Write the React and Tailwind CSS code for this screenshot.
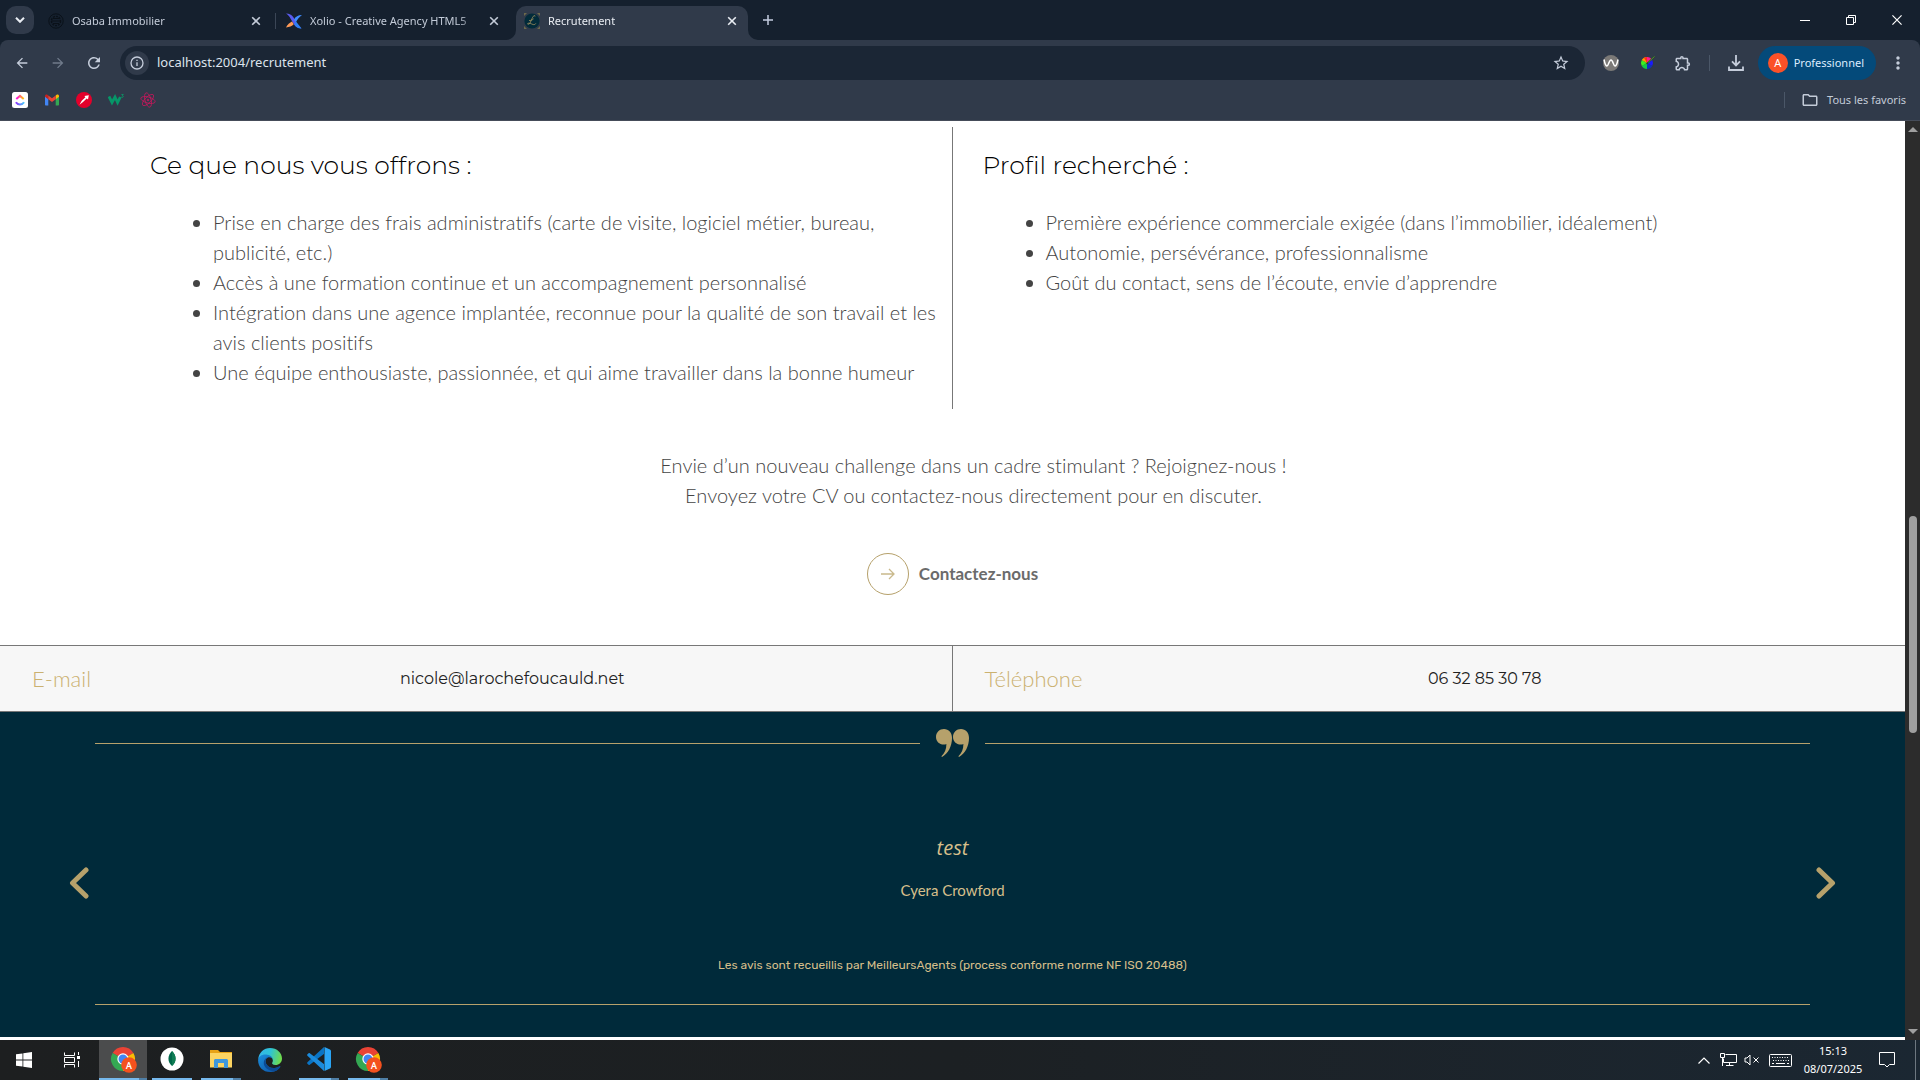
import React from "react";
import {
  MdArrowBack,
  MdArrowForward,
  MdRefresh,
  MdStarBorder,
  MdOutlineExtension,
  MdMoreVert,
  MdOutlineFolder,
} from "react-icons/md";

const uiFont = "font-['Noto_Sans','Open_Sans',sans-serif]";

/* ---------- small drawings ---------- */

function Cross({ className = "size-2.5", width = 1.6 }) {
  return (
    <svg viewBox="0 0 10 10" className={className} fill="none" stroke="currentColor" strokeWidth={width}>
      <path d="M1.2 1.2l7.6 7.6M8.8 1.2L1.2 8.8" />
    </svg>
  );
}

function OsabaIcon() {
  return (
    <svg viewBox="0 0 16 16" className="size-4 shrink-0" fill="none" stroke="#0a1119">
      <circle cx="8" cy="8" r="7.2" />
      <circle cx="8" cy="8" r="4.6" strokeWidth="1.4" strokeDasharray="2 1" />
      <path d="M3 8h10M5 5.5h6M5 10.5h6" />
    </svg>
  );
}

function XolioIcon() {
  return (
    <svg viewBox="0 0 16 16" className="size-4 shrink-0">
      <path d="M0 .5c3.500.2 5.500 1 7.200 3.500L9.600 8c1 2.200 2.600 4.700 5.600 7.400-4.200-.4-6.200-2-7.600-4.600L4.500 5.500C3.500 3.500 2 1.800 0 .5z" fill="#5b5bf0" />
      <path d="M16 2c-4 .2-6.500 1.500-8 4.500l1.800 3C11.200 6.500 13 4.500 16 2z" fill="#3f8cff" />
      <path d="M6 8.500c-2 1.300-4.800 3-6 6 3.400-.4 6-1.500 7.800-3.300z" fill="#ff9a57" />
      <path d="M9.600 8l6 7.400c-3 .3-5.600-1-7.200-4z" fill="#2f80f5" />
    </svg>
  );
}

function RecruitIcon() {
  return (
    <svg viewBox="0 0 16 16" className="size-4 shrink-0">
      <path d="M0 0h3L0 3zM16 0v3l-3-3zM0 16v-3l3 3zM16 16h-3l3-3z" fill="#6d6a4c" />
      <circle cx="8" cy="8" r="7.600" fill="#022b3a" />
      <path d="M11 3.500c.6-1.500-1.500-1-2.300.7L6 10c-.6 1.300-2.400 1.700-2.400.8 0-1 2.600-.6 4.600.4 1.500.7 3 .6 3.600-.8M5 7.500c1.600.2 3.500-.6 4.600-1.700" fill="none" stroke="#a3935f" strokeWidth=".8" />
    </svg>
  );
}

function ClickUpIcon() {
  return (
    <svg viewBox="0 0 16 16" className="size-4">
      <defs>
        <linearGradient id="cuTop" x1="0" x2="1">
          <stop offset="0" stopColor="#ff02f0" />
          <stop offset="1" stopColor="#ffc800" />
        </linearGradient>
        <linearGradient id="cuLow" x1="0" x2="1">
          <stop offset="0" stopColor="#8930fd" />
          <stop offset="1" stopColor="#49ccf9" />
        </linearGradient>
      </defs>
      <rect width="16" height="16" rx="2.500" fill="#fff" />
      <path d="M4.300 7L8 3.900 11.700 7" fill="none" stroke="url(#cuTop)" strokeWidth="2" />
      <path d="M3.900 10.300c2 3 6.200 3 8.200 0" fill="none" stroke="url(#cuLow)" strokeWidth="2" />
    </svg>
  );
}

function GmailIcon() {
  return (
    <svg viewBox="0 0 16 16" className="size-4">
      <path d="M1 4v8.800c0 .4.300.7.700.7h2.600V6.500z" fill="#4285f4" />
      <path d="M15 4v8.800c0 .4-.3.700-.7.700h-2.600V6.500z" fill="#34a853" />
      <path d="M11.700 3.500V7.200L15 4.700V4c0-1.400-1.500-2-2.400-1.200z" fill="#fbbc04" />
      <path d="M4.300 3.500V7.200L1 4.700V4c0-1.400 1.500-2 2.400-1.200z" fill="#c5221f" />
      <path d="M4.300 7.200V3.500L8 6.300l3.700-2.800v3.700L8 10z" fill="#ea4335" />
    </svg>
  );
}

function RedArrowIcon() {
  return (
    <svg viewBox="0 0 16 16" className="size-4">
      <circle cx="8" cy="8" r="8" fill="#e4002b" />
      <path d="M12.800 3.200l-.8 4.300-1.300-1-3.700 3.600L3.500 12.800l2.200-4 3.700-3.600-1-1.200z" fill="#fff" />
    </svg>
  );
}

function W3Icon() {
  return (
    <svg viewBox="0 0 16 16" className="size-4" fill="none" stroke="#04aa6d">
      <path d="M1 4.500l3 6L7 5l2.600 5.500L12.300 5" strokeWidth="2.800" stroke="#069668" />
      <path d="M13.400 2.500h1.900l-1 1.200c1.600.1 1.200 1.800-.2 1.700l-.8-.3" strokeWidth=".7" />
    </svg>
  );
}

function AtomIcon() {
  return (
    <svg viewBox="0 0 16 16" className="size-4" fill="none" stroke="#c2185b" strokeWidth=".8">
      <ellipse cx="8" cy="8" rx="7.400" ry="3" transform="rotate(15 8 8)" />
      <ellipse cx="8" cy="8" rx="7.400" ry="3" transform="rotate(75 8 8)" />
      <ellipse cx="8" cy="8" rx="7.400" ry="3" transform="rotate(135 8 8)" />
      <circle cx="8" cy="8" r=".8" fill="#c2185b" />
    </svg>
  );
}

function WaveExtensionIcon() {
  return (
    <svg viewBox="0 0 16 16" className="size-4">
      <circle cx="8" cy="8" r="8" fill="#7b7977" />
      <path d="M1 4.500c.8 4 1.500 6.500 3 6.500s2-6 4-6 2.400 6 4 6 2.200-2.500 3-6.500" fill="none" stroke="#fff" strokeWidth="1.500" />
    </svg>
  );
}

function ColorWheel() {
  const slices = [
    ["M8 8V2A6 6 0 0 1 13.200 5z", "#ff1a8c"],
    ["M8 8l5.200-3a6 6 0 0 1 0 6z", "#1a1aff"],
    ["M8 8l5.200 3A6 6 0 0 1 8 14z", "#1030c0"],
    ["M8 8v6a6 6 0 0 1-5.200-3z", "#12c94a"],
    ["M8 8l-5.200 3a6 6 0 0 1 0-6z", "#3bf020"],
    ["M8 8L2.800 5A6 6 0 0 1 8 2z", "#ffa000"],
    ["M8 8L5 2.800A6 6 0 0 1 8 2z", "#ff2a1a"],
  ];
  return (
    <svg viewBox="0 0 16 16" className="size-4">
      {slices.map(([d, c]) => (
        <path key={c} d={d} fill={c} />
      ))}
      <path d="M7.500 9L15.500 1.500" stroke="#2c4a22" strokeWidth="1.500" />
      <path d="M9 7.500l6.500-6" stroke="#4c8b33" strokeWidth="1" />
    </svg>
  );
}

function ChromeBadge() {
  return (
    <svg viewBox="0 0 24 24" className="size-6 overflow-visible">
      <path d="M12 12L1.600 6A12 12 0 0 1 22.400 6z" fill="#ea4335" />
      <path d="M12 12L22.400 6A12 12 0 0 1 12 24z" fill="#fbbc04" />
      <path d="M12 12v12A12 12 0 0 1 1.600 6z" fill="#34a853" />
      <circle cx="12" cy="12" r="5.700" fill="#fff" />
      <circle cx="12" cy="12" r="4.500" fill="#4285f4" />
      <circle cx="18" cy="18" r="7.800" fill="#f4511e" />
      <text x="18" y="21.500" textAnchor="middle" fontSize="9.500" fontWeight="500" fill="#fff" fontFamily="Roboto, sans-serif">A</text>
    </svg>
  );
}

function MongoIcon() {
  return (
    <svg viewBox="0 0 24 24" className="size-6">
      <circle cx="12" cy="12" r="11.500" fill="#fff" />
      <path d="M12 4c4.500 4.500 5 10.500 0 15-5-4.500-4.500-10.500 0-15z" fill="#00684a" />
      <path d="M12 4c4.500 4.500 5 10.500 0 15z" fill="#0f7d53" />
    </svg>
  );
}

function ExplorerIcon() {
  return (
    <svg viewBox="0 0 24 20" className="h-5 w-6">
      <path d="M1 1h8l2 2h12v5H1z" fill="#e8a317" />
      <path d="M1 4h22v14.500H1z" fill="#fcd462" />
      <path d="M5 19v-7.500c0-.8.700-1.500 1.500-1.500h11c.800 0 1.500.7 1.500 1.500V19h-4v-5H9v5z" fill="#3f97dc" />
    </svg>
  );
}

function EdgeIcon() {
  return (
    <svg viewBox="0 0 24 24" className="size-6">
      <defs>
        <linearGradient id="edTop" x1="0" x2="1" y1=".2" y2=".4">
          <stop offset="0" stopColor="#36b5ea" />
          <stop offset=".5" stopColor="#2ec3d6" />
          <stop offset="1" stopColor="#6fdc4c" />
        </linearGradient>
        <linearGradient id="edLow" x1="0" x2="1" y1="0" y2="1">
          <stop offset="0" stopColor="#1b8fdc" />
          <stop offset="1" stopColor="#0c4fa0" />
        </linearGradient>
      </defs>
      <path d="M.2 11C1 4.500 5.900 0 12 0c7 0 12 5 12 10.500 0 4-3 6.500-6.500 6.500-3 0-4-1.300-3.200-2.400 1.500-2.100.2-5.600-3.500-6.100C6.500 7.500 2 8.500.2 11z" fill="url(#edTop)" />
      <path d="M.1 12C.5 8.500 4 6.300 8 6.600c3.800.3 6.500 2.300 6.800 4.700-.8-1.600-2.500-2.400-4.300-2.100C7.800 10 7 13 8 15.500c1.200 3 4.800 5 8.700 4.500 2-.2 3.700-1 5-1.700.5-.2.800.2.500.6A12 12 0 0 1 12 24C5 24 0 18.800.1 12z" fill="url(#edLow)" />
      <path d="M10.500 9.200C7.500 10 6.800 13 8 15.500c1.200 3 4.800 5 8.700 4.500 2-.2 3.700-1 5-1.700.5-.2.800.2.500.6-1.300 2-3.300 3.600-5.500 4.400C10 23 5.500 19 5.800 14.500c.1-3 2-4.800 4.700-5.300z" fill="#0b4a94" />
    </svg>
  );
}

function CodeIcon() {
  return (
    <svg viewBox="0 0 24 24" className="size-6">
      <path d="M17.500 6.500L2.800 17.800c-.4.300-.9.300-1.200 0L.4 16.700c-.4-.4-.4-1 0-1.400L17 0v6.500z" fill="#0a74c4" />
      <path d="M17.500 17.500L2.800 6.200c-.4-.3-.9-.3-1.200 0L.4 7.300c-.4.400-.4 1 0 1.400L17 24v-6.500z" fill="#1b8bdc" />
      <path d="M17.500 0L23 2.600c.6.300 1 .9 1 1.500v15.800c0 .6-.4 1.200-1 1.500L17.500 24z" fill="#2aa5f5" />
    </svg>
  );
}

function WindowsIcon() {
  return (
    <svg viewBox="0 0 16 16" className="size-4" fill="#fff">
      <path d="M0 2.300L6.500 1.400v6.200H0zM7.300 1.300L16 0v7.600H7.300zM0 8.400h6.500v6.200L0 13.700zM7.300 8.400H16V16l-8.700-1.300z" />
    </svg>
  );
}

function TaskViewIcon() {
  return (
    <svg viewBox="0 0 16 16" className="size-4" fill="none" stroke="#fff">
      <path d="M.5.500v3h10v-3M.5 15.500v-3h10v3M.5 5.500h10v5H.500zM14.500 0v3M14.500 9v6" />
      <path d="M13 4h3v3h-3z" fill="#fff" stroke="none" />
    </svg>
  );
}

/* ---------- browser chrome ---------- */

function Tab({ icon, title, active, divider }) {
  return (
    <div
      className={
        active
          ? "relative flex h-[34px] w-58 items-center rounded-t-[10px] bg-[#303a4a] pb-1 pl-2 text-[#e9edf3]"
          : "flex h-[34px] w-[238px] items-center pb-1 pl-2 text-[#c3cbd8]"
      }
    >
      {active && (
        <>
          <svg viewBox="0 0 10 10" className="absolute bottom-0 -left-2.5 size-2.5" fill="#303a4a">
            <path d="M10 0v10H0A10 10 0 0 0 10 0z" />
          </svg>
          <svg viewBox="0 0 10 10" className="absolute -right-2.5 bottom-0 size-2.5" fill="#303a4a">
            <path d="M0 0v10h10A10 10 0 0 1 0 0z" />
          </svg>
        </>
      )}
      {icon}
      <button
        role="tab"
        aria-selected={!!active}
        className="ml-2 w-[166px] overflow-hidden mask-r-from-90% text-left text-[11px] whitespace-nowrap"
      >
        {title}
      </button>
      <button aria-label={`Fermer ${title}`} className="ml-1.5 flex size-6 items-center justify-center">
        <Cross />
      </button>
      {divider && <span className="ml-[7px] h-4 w-px bg-[#3b4656]" />}
    </div>
  );
}

function TabStrip() {
  return (
    <div className="flex h-10 items-end bg-[#15202e]">
      <button
        aria-label="Rechercher dans les onglets"
        className="mb-1.5 ml-1.5 flex size-7 items-center justify-center rounded-[10px] bg-[#303a4a] text-[#e9edf3]"
      >
        <svg viewBox="0 0 10 6" className="h-1.5 w-2.5" fill="none" stroke="currentColor" strokeWidth="2">
          <path d="M1 .8l4 4 4-4" />
        </svg>
      </button>
      <div role="tablist" className="ml-1.5 flex items-end">
        <Tab icon={<OsabaIcon />} title="Osaba Immobilier" divider />
        <Tab icon={<XolioIcon />} title="Xolio - Creative Agency HTML5" />
        <Tab icon={<RecruitIcon />} title="Recrutement" active />
      </div>
      <button aria-label="Nouvel onglet" className="ml-1.5 flex h-10 w-7 items-center justify-center text-[#c3cbe0]">
        <svg viewBox="0 0 10 10" className="size-2.5" stroke="currentColor" strokeWidth="1.500">
          <path d="M5 0v10M0 5h10" />
        </svg>
      </button>
      <div className="ml-auto flex h-10 text-white">
        <button aria-label="Réduire" className="flex w-[46px] items-center justify-center">
          <span className="h-px w-2.5 bg-white" />
        </button>
        <button aria-label="Restaurer" className="flex w-[46px] items-center justify-center">
          <svg viewBox="0 0 10 10" className="size-2.5" fill="none" stroke="currentColor">
            <path d="M.5 2.500h7v7h-7zM2.500 2.500v-2h7v7h-2" />
          </svg>
        </button>
        <button aria-label="Fermer" className="flex w-[46px] items-center justify-center">
          <Cross className="size-3" width={1} />
        </button>
      </div>
    </div>
  );
}

function Toolbar() {
  return (
    <div className="flex h-[46px] items-center rounded-t-lg bg-[#303a4a] text-[#c5cddb]">
      <button aria-label="Retour" className="flex w-11 justify-center"><MdArrowBack className="size-4" /></button>
      <button aria-label="Avancer" className="flex w-7 justify-center text-[#707b8b]"><MdArrowForward className="size-4" /></button>
      <button aria-label="Actualiser" className="flex w-11 justify-center"><MdRefresh className="size-[18px]" /></button>
      <div className="ml-1 flex h-[34px] flex-1 items-center rounded-full bg-[#1b2635] pl-[5px]">
        <button aria-label="Informations sur le site" className="flex size-6 items-center justify-center rounded-full bg-[#303a4a]">
          <svg viewBox="0 0 14 14" className="size-3.5" fill="none" stroke="currentColor" strokeWidth="1.300">
            <circle cx="7" cy="7" r="6" />
            <path d="M7 6.200V10M7 3.800v1.300" />
          </svg>
        </button>
        <input
          aria-label="Barre d'adresse"
          defaultValue="localhost:2004/recrutement"
          className="ml-2 min-w-0 flex-1 bg-transparent text-[13px] text-[#dde3ec] outline-none"
        />
        <button aria-label="Ajouter aux favoris" className="mr-3.5 flex size-5 items-center justify-center">
          <MdStarBorder className="size-[18px]" />
        </button>
      </div>
      <div className="ml-2 flex items-center">
        <button aria-label="Extension W" className="flex w-9 justify-center"><WaveExtensionIcon /></button>
        <button aria-label="Pipette à couleurs" className="flex w-9 justify-center"><ColorWheel /></button>
        <button aria-label="Extensions" className="flex w-9 justify-center"><MdOutlineExtension className="size-[18px]" /></button>
        <span className="mx-2 h-4 w-px bg-[#4b5768]" />
        <button aria-label="Téléchargements" className="flex w-9 justify-center">
          <svg viewBox="0 0 16 16" className="size-4" fill="none" stroke="currentColor" strokeWidth="1.800">
            <path d="M8 0v10M4 6.400l4 4 4-4M1 11.500V15h14v-3.500" />
          </svg>
        </button>
      </div>
      <button className="ml-1 flex h-[34px] items-center gap-1.5 rounded-full bg-[#044a7a] pr-3 pl-2.5 text-[11px] text-[#dcecff]">
        <span className="flex size-5 items-center justify-center rounded-full bg-[#fb5128] text-[11px] text-white">A</span>
        Professionnel
      </button>
      <button aria-label="Menu" className="flex w-11 justify-center"><MdMoreVert className="size-5" /></button>
    </div>
  );
}

function Bookmarks() {
  const items = [
    ["ClickUp", <ClickUpIcon />],
    ["Gmail", <GmailIcon />],
    ["Flèche", <RedArrowIcon />],
    ["W3Schools", <W3Icon />],
    ["Atome", <AtomIcon />],
  ];
  return (
    <div className="flex h-[35px] items-center border-b border-[#454c59] bg-[#303a4a] pr-3.5 pb-1.5 pl-3 text-[#c3cbd8]">
      <div className="flex gap-4">
        {items.map(([label, icon]) => (
          <a key={label} href="#" aria-label={label}>
            {icon}
          </a>
        ))}
      </div>
      <span className="mr-4 ml-auto h-4 w-px bg-[#4b5768]" />
      <button className="flex items-center gap-2 text-[11px]">
        <MdOutlineFolder className="size-[18px]" />
        Tous les favoris
      </button>
    </div>
  );
}

/* ---------- page ---------- */

const headFont = "font-['Montserrat','Inter',sans-serif]";

function Offer({ title, items, className }) {
  return (
    <section className={className}>
      <h2 className={`${headFont} text-[25px] leading-9 font-light text-black`}>{title}</h2>
      <ul className="mt-6 list-disc pl-[63px]">
        {items.map((t) => (
          <li key={t}>{t}</li>
        ))}
      </ul>
    </section>
  );
}

function Contact({ label, value, href, className = "" }) {
  return (
    <div className={`flex items-center pr-[18px] pl-8 ${className}`}>
      <span className="text-[22px] font-light text-[#cbb170]">{label}</span>
      <a href={href} className={`${headFont} flex-1 text-center text-base text-[#222]`}>
        {value}
      </a>
    </div>
  );
}

function Chevron({ flip }) {
  return (
    <svg viewBox="0 0 20 32" className={flip ? "h-8 w-5 rotate-180" : "h-8 w-5"} fill="none" stroke="#b6a16b" strokeWidth="5" strokeLinecap="round" strokeLinejoin="round">
      <path d="M17 3L3.500 16 17 29" />
    </svg>
  );
}

function Quotes() {
  return (
    <svg viewBox="0 0 33 28" className="h-7 w-[33px]" fill="#b6a16b">
      <path id="qm" d="M8 0c4.700 0 8 3.500 8 9 0 8.500-4 15.500-10 19l-.6-.8c3.300-3 5-7 5-12.300-.8.500-1.700.700-2.700.700C3.300 15.600 0 12.400 0 8c0-4.600 3.500-8 8-8z" />
      <use href="#qm" x="17" />
    </svg>
  );
}

function Page() {
  return (
    <main className="min-w-0 flex-1 bg-white font-['Brandon_Grotesque','Lato',sans-serif] [font-variant-ligatures:none]">
      <div className="grid grid-cols-2 pt-1.5 text-xl leading-[30px] font-light text-[#444]">
        <Offer
          title="Ce que nous vous offrons :"
          className="border-r border-[#777] pt-5 pr-2 pb-[22px] pl-[150px]"
          items={[
            "Prise en charge des frais administratifs (carte de visite, logiciel métier, bureau, publicité, etc.)",
            "Accès à une formation continue et un accompagnement personnalisé",
            "Intégration dans une agence implantée, reconnue pour la qualité de son travail et les avis clients positifs",
            "Une équipe enthousiaste, passionnée, et qui aime travailler dans la bonne humeur",
          ]}
        />
        <Offer
          title="Profil recherché :"
          className="pt-5 pr-6 pl-[30px]"
          items={[
            "Première expérience commerciale exigée (dans l’immobilier, idéalement)",
            "Autonomie, persévérance, professionnalisme",
            "Goût du contact, sens de l’écoute, envie d’apprendre",
          ]}
        />
      </div>

      <p className="mt-[41px] pl-[42px] text-center text-xl leading-[30px] font-light text-[#444]">
        Envie d’un nouveau challenge dans un cadre stimulant ? Rejoignez-nous !
        <br />
        Envoyez votre CV ou contactez-nous directement pour en discuter.
      </p>

      <div className="flex justify-center pt-[43px] pb-[50px]">
        <a href="#contact" className="flex items-center gap-2.5 text-[17px] font-bold text-[#6b6b6b]">
          <span className="flex size-[42px] items-center justify-center rounded-full border border-[#b6a16b]">
            <svg viewBox="0 0 14 12" className="h-3 w-3.5" fill="none" stroke="#c9b98c" strokeWidth="1.300">
              <path d="M0 6h13M8 1l5 5-5 5" />
            </svg>
          </span>
          Contactez-nous
        </a>
      </div>

      <div className="grid h-[67px] grid-cols-2 border-y border-[#777] bg-[#f7f7f7]">
        <Contact label="E-mail" value="nicole@larochefoucauld.net" href="mailto:nicole@larochefoucauld.net" className="border-r border-[#777]" />
        <Contact label="Téléphone" value="06 32 85 30 78" href="tel:0632853078" />
      </div>

      <section className="bg-[#002a3a] pt-[17px] pb-8 text-[#d6bf8b]">
        <div className="mx-[5%] flex items-center gap-4">
          <span className="h-px flex-1 bg-[#b6a16b]" />
          <Quotes />
          <span className="h-px flex-1 bg-[#b6a16b]" />
        </div>
        <div className="flex items-center justify-between px-[69px] pt-[77px]">
          <button aria-label="Avis précédent" className="pt-[30px]"><Chevron /></button>
          <div className="text-center">
            <p className="font-['Open_Sans',sans-serif] text-xl leading-7 italic">test</p>
            <p className="mt-4 text-[15px] leading-6">Cyera Crowford</p>
          </div>
          <button aria-label="Avis suivant" className="pt-[30px]"><Chevron flip /></button>
        </div>
        <p className="mt-[54px] text-center font-['Rubik','Roboto',sans-serif] text-xs leading-[18px]">
          Les avis sont recueillis par MeilleursAgents (process conforme norme NF ISO 20488)
        </p>
        <div className="mx-[5%] mt-[30px] h-px bg-[#b6a16b]" />
      </section>
    </main>
  );
}

function Scrollbar() {
  return (
    <div className="flex w-[15px] flex-col items-center bg-[#2c2c2c] py-1.5" aria-hidden="true">
      <svg viewBox="0 0 10 5" className="h-[5px] w-2.5" fill="#9f9f9f"><path d="M5 0l5 5H0z" /></svg>
      <span className="basis-[384px]" />
      <span className="h-[217px] w-2 rounded-full bg-[#9f9f9f]" />
      <span className="flex-1" />
      <svg viewBox="0 0 10 5" className="h-[5px] w-2.5" fill="#9f9f9f"><path d="M5 5l5-5H0z" /></svg>
    </div>
  );
}

/* ---------- taskbar ---------- */

function Pinned({ label, icon, running, multiple, active }) {
  return (
    <button
      aria-label={label}
      className={
        active
          ? "mr-[5px] flex h-10 w-12 flex-col bg-[#4b4c4d]"
          : "mr-[9px] flex h-10 w-10 flex-col"
      }
    >
      <span className="flex w-full flex-1 items-center justify-center">{icon}</span>
      {running && (
        <span className="flex h-0.5 w-full bg-[#76b9ed]">
          {multiple && <span className="ml-auto w-2 bg-[#4f7fa6]" />}
        </span>
      )}
    </button>
  );
}

function Taskbar() {
  return (
    <footer className="flex h-10 items-stretch bg-linear-to-r from-[#1d1f20] via-[#1c2023] to-[#1b2732] text-white">
      <button aria-label="Démarrer" className="flex w-12 items-center justify-center"><WindowsIcon /></button>
      <button aria-label="Affichage des tâches" className="mr-[3px] flex w-12 items-center justify-center"><TaskViewIcon /></button>
      <Pinned label="Chrome" icon={<ChromeBadge />} running multiple active />
      <Pinned label="MongoDB Compass" icon={<MongoIcon />} running />
      <Pinned label="Explorateur" icon={<ExplorerIcon />} running multiple />
      <Pinned label="Edge" icon={<EdgeIcon />} />
      <Pinned label="Visual Studio Code" icon={<CodeIcon />} running multiple />
      <Pinned label="Chrome Professionnel" icon={<ChromeBadge />} running multiple />
      <div className="ml-auto flex items-center">
        <button aria-label="Icônes cachées" className="flex w-6 justify-center">
          <svg viewBox="0 0 12 7" className="h-[7px] w-3" fill="none" stroke="#fff" strokeWidth="1.200"><path d="M.5 6.500L6 1l5.500 5.500" /></svg>
        </button>
        <button aria-label="Réseau" className="flex w-6 justify-center">
          <svg viewBox="0 0 17 14" className="h-3.5 w-[17px]" fill="none" stroke="#fff">
            <path d="M5.500 1.500h11v8h-13v-4M.5.500h4v4h-4zM2.500 4.500v8.500M9.500 9.500v3.500M6 12.500h7.500" />
          </svg>
        </button>
        <button aria-label="Volume" className="flex w-6 justify-center">
          <svg viewBox="0 0 16 12" className="h-3 w-4" fill="none" stroke="#fff">
            <path d="M1 4v4h2l3 3V1L3 4zM9.500 3.500l5 5M14.500 3.500l-5 5" />
          </svg>
        </button>
        <button aria-label="Clavier" className="mx-1 flex w-6 justify-center">
          <svg viewBox="0 0 23 13" className="h-[13px] w-[23px]" fill="none" stroke="#fff">
            <rect x=".5" y=".5" width="22" height="12" rx="1" />
            <path d="M3 3.500h17M4 6.500h16" strokeDasharray="1 1.500" />
            <path d="M3 9.500h2M7 9.500h9M18 9.500h2" />
          </svg>
        </button>
        <button className="w-[74px] text-center text-[11px] leading-[18px]">
          <time className="block">15:13</time>
          <time className="block">08/07/2025</time>
        </button>
        <button aria-label="Notifications" className="mr-[19px] ml-2 flex w-[18px] justify-center">
          <svg viewBox="0 0 16 16" className="mx-auto size-4" fill="none" stroke="#fff">
            <path d="M.5.500h15v12h-5L8 15l-2.500-2.500h-5z" />
          </svg>
        </button>
        <button aria-label="Afficher le bureau" className="h-10 w-[5px] border-l border-[#6d7780]" />
      </div>
    </footer>
  );
}

export default function App() {
  return (
    <div className={`flex min-h-screen flex-col overflow-hidden bg-[#15202e] ${uiFont}`}>
      <header>
        <TabStrip />
        <Toolbar />
        <Bookmarks />
      </header>
      <div className="flex flex-1">
        <Page />
        <Scrollbar />
      </div>
      <Taskbar />
    </div>
  );
}
